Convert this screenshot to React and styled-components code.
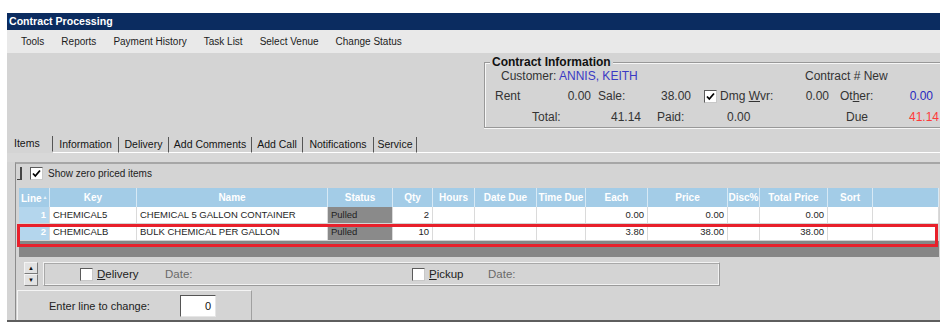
import React from 'react';
import styled, { createGlobalStyle } from 'styled-components';

const GlobalStyle = createGlobalStyle`
  body {
    margin: 0;
    background: #fff;
    font-family: "Liberation Sans", Arial, sans-serif;
  }
`;

const columns = [
  { key: 'line', label: 'Line', w: 31, align: 'right' },
  { key: 'key', label: 'Key', w: 87, align: 'left' },
  { key: 'name', label: 'Name', w: 191, align: 'left' },
  { key: 'status', label: 'Status', w: 65, align: 'left' },
  { key: 'qty', label: 'Qty', w: 40, align: 'right' },
  { key: 'hours', label: 'Hours', w: 42, align: 'right' },
  { key: 'due', label: 'Date Due', w: 62, align: 'left' },
  { key: 'time', label: 'Time Due', w: 49, align: 'left' },
  { key: 'each', label: 'Each', w: 62, align: 'right' },
  { key: 'price', label: 'Price', w: 80, align: 'right' },
  { key: 'disc', label: 'Disc%', w: 32, align: 'right' },
  { key: 'total', label: 'Total Price', w: 68, align: 'right' },
  { key: 'sort', label: 'Sort', w: 45, align: 'left' },
  { key: 'fill', label: '', w: 66, align: 'left' },
];

const rows = [
  { line: '1', key: 'CHEMICAL5', name: 'CHEMICAL 5 GALLON CONTAINER', status: 'Pulled', qty: '2', each: '0.00', price: '0.00', total: '0.00' },
  { line: '2', key: 'CHEMICALB', name: 'BULK CHEMICAL PER GALLON', status: 'Pulled', qty: '10', each: '3.80', price: '38.00', total: '38.00' },
];

const tabs = [
  { label: 'Items', w: 46, active: true },
  { label: 'Information', w: 66 },
  { label: 'Delivery', w: 50 },
  { label: 'Add Comments', w: 83 },
  { label: 'Add Call', w: 51 },
  { label: 'Notifications', w: 71 },
  { label: 'Service', w: 43 },
];

const menu = ['Tools', 'Reports', 'Payment History', 'Task List', 'Select Venue', 'Change Status'];

const gridTemplate = columns.map(c => `${c.w}px`).join(' ');

function Checkbox({ checked }) {
  return (
    <Box>
      {checked && (
        <svg width="11" height="11" viewBox="0 0 11 11">
          <path d="M2 5.5 L4.3 8 L9 2.5" stroke="#000" strokeWidth="1.8" fill="none" />
        </svg>
      )}
    </Box>
  );
}

function App() {
  return (
    <>
      <GlobalStyle />
      <Window>
        <TitleBar>Contract Processing</TitleBar>

        <MenuBar>
          {menu.map(m => <MenuItem key={m}>{m}</MenuItem>)}
        </MenuBar>

        <Toolbar>
          <GroupBox>
            <Legend>Contract Information</Legend>
            <InfoRow h={20}>
              <Cell w={320} pl={16}>Customer: <Value color="#3a3ac4">ANNIS, KEITH</Value></Cell>
              <Cell w={100}>Contract # New</Cell>
            </InfoRow>
            <InfoRow h={20}>
              <Cell w={50} pl={10}>Rent</Cell>
              <Cell w={56} right>0.00</Cell>
              <Cell w={59} pl={7}>Sale:</Cell>
              <Cell w={41} right>38.00</Cell>
              <Cell w={29} pl={13}><Checkbox checked /></Cell>
              <Cell w={70}>Dmg <u>W</u>vr:</Cell>
              <Cell w={39} right>0.00</Cell>
              <Cell w={61} pl={11}>Ot<u>h</u>er:</Cell>
              <Cell w={43} right><Value color="#2828c0">0.00</Value></Cell>
            </InfoRow>
            <InfoRow h={21}>
              <Cell w={115} pl={47}>Total:</Cell>
              <Cell w={41} right>41.14</Cell>
              <Cell w={86} pl={16}>Paid:</Cell>
              <Cell w={119}>0.00</Cell>
              <Cell w={49}>Due</Cell>
              <Cell w={44} right><Value color="#ff3a3a">41.14</Value></Cell>
            </InfoRow>
          </GroupBox>
        </Toolbar>

        <TabStrip>
          {tabs.map(t => (
            <Tab key={t.label} w={t.w} $active={t.active}>{t.label}</Tab>
          ))}
          <TabFill />
        </TabStrip>
        <Band />

        <ItemsPanel>
          <OptionsRow>
            <Bracket />
            <Checkbox checked />
            <OptionText>Show zero priced items</OptionText>
          </OptionsRow>

          <Grid>
            <HeaderRow>
              {columns.map(c => (
                <HeadCell key={c.key} $first={c.key === 'line'}>
                  {c.label}
                  {c.key === 'line' && <SortArrow>▲</SortArrow>}
                </HeadCell>
              ))}
            </HeaderRow>
            {rows.map(r => (
              <Row key={r.line}>
                {columns.map(c => (
                  <DataCell key={c.key} $align={c.align} $kind={c.key}>
                    {r[c.key] || ''}
                  </DataCell>
                ))}
              </Row>
            ))}
            <Highlight />
          </Grid>

          <ControlsRow>
            <Spinner>
              <SpinButton>▲</SpinButton>
              <SpinButton>▼</SpinButton>
            </Spinner>
            <DeliveryBox>
              <Slot w={85}>
                <Checkbox />
                <SlotLabel><u>D</u>elivery</SlotLabel>
              </Slot>
              <Slot w={247}><DateLabel>Date:</DateLabel></Slot>
              <Slot w={76}>
                <Checkbox />
                <SlotLabel><u>P</u>ickup</SlotLabel>
              </Slot>
              <Slot w={100}><DateLabel>Date:</DateLabel></Slot>
            </DeliveryBox>
          </ControlsRow>

          <LineBox>
            <LineLabel>Enter line to change:</LineLabel>
            <LineInput>0</LineInput>
          </LineBox>
        </ItemsPanel>
      </Window>
    </>
  );
}

const Window = styled.div`
  margin: 13px 0 0 7px;
  width: 933px;
  height: 309px;
  box-sizing: border-box;
  background: #d4d4d4;
  border-bottom: 2px solid #5e5e5e;
  display: flex;
  flex-direction: column;
  overflow: hidden;
`;

const TitleBar = styled.div`
  height: 17px;
  line-height: 17px;
  flex: none;
  background: #0b2c60;
  color: #fff;
  font-weight: bold;
  font-size: 10.6px;
  padding-left: 2px;
`;

const MenuBar = styled.div`
  height: 23px;
  flex: none;
  background: #e9e9e9;
  display: flex;
  align-items: center;
  gap: 17px;
  padding-left: 14px;
`;

const MenuItem = styled.span`
  font-size: 10px;
  color: #1c1c1c;
`;

const Toolbar = styled.div`
  height: 77px;
  flex: none;
  display: flex;
  justify-content: flex-end;
  align-items: flex-start;
`;

const GroupBox = styled.div`
  margin-top: 9px;
  width: 456px;
  height: 66px;
  box-sizing: border-box;
  border: 1px solid #989898;
  border-right: none;
  box-shadow: inset 1px 1px 0 #f6f6f6, 0 1px 0 #f6f6f6;
  display: flex;
  flex-direction: column;
`;

const Legend = styled.div`
  align-self: flex-start;
  margin: -8px 0 -3px 5px;
  padding: 0 2px;
  background: #d4d4d4;
  font-weight: bold;
  font-size: 12px;
  line-height: 14px;
  color: #111;
`;

const InfoRow = styled.div`
  height: ${p => p.h}px;
  display: flex;
  align-items: center;
  font-size: 12px;
  color: #333;
`;

const Cell = styled.div`
  flex: none;
  width: ${p => p.w}px;
  box-sizing: border-box;
  padding-left: ${p => p.pl || 0}px;
  text-align: ${p => (p.right ? 'right' : 'left')};
  white-space: nowrap;
  line-height: 14px;
`;

const Value = styled.span`
  color: ${p => p.color};
`;

const Box = styled.span`
  width: 13px;
  height: 13px;
  flex: none;
  box-sizing: border-box;
  background: #fff;
  border: 1px solid;
  border-color: #5a5a5a #c8c8c8 #c8c8c8 #5a5a5a;
  display: inline-flex;
  align-items: center;
  justify-content: center;
  vertical-align: middle;
`;

const TabStrip = styled.div`
  height: 23px;
  flex: none;
  display: flex;
  align-items: flex-end;
`;

const Tab = styled.div`
  width: ${p => p.w}px;
  height: 16px;
  box-sizing: border-box;
  flex: none;
  font-size: 10.5px;
  line-height: 15px;
  color: #151515;
  text-align: ${p => (p.$active ? 'left' : 'center')};
  padding-left: ${p => (p.$active ? 7 : 0)}px;
  border-right: 1px solid #555;
  border-bottom: 1px solid ${p => (p.$active ? 'transparent' : '#fff')};
  ${p => p.$active && 'margin-bottom: 1px;'}
`;

const TabFill = styled.div`
  flex: 1;
  border-bottom: 1px solid #fff;
`;

const Band = styled.div`
  height: 9px;
  flex: none;
  background: #d8d8d8;
`;

const ItemsPanel = styled.div`
  flex: 1;
  margin-left: 8px;
  border-left: 1px solid #8c8c8c;
  border-top: 2px solid #a6a6a6;
  display: flex;
  flex-direction: column;
`;

const OptionsRow = styled.div`
  height: 18px;
  display: flex;
  align-items: center;
`;

const Bracket = styled.span`
  width: 3px;
  height: 12px;
  margin: 0 8px 0 1px;
  border-right: 2px solid #444;
  border-bottom: 1px solid #444;
`;

const OptionText = styled.span`
  margin-left: 5px;
  font-size: 10px;
  color: #222;
`;

const Grid = styled.div`
  position: relative;
  margin: 6px 0 0 3px;
  width: 920px;
  height: 69px;
  background: #868686;
`;

const HeaderRow = styled.div`
  display: grid;
  grid-template-columns: ${gridTemplate};
  height: 19px;
  background: #a3cce7;
`;

const HeadCell = styled.div`
  border-right: 1px solid #d7e9f5;
  color: #fff;
  font-weight: bold;
  font-size: 10px;
  line-height: 19px;
  text-align: ${p => (p.$first ? 'left' : 'center')};
  padding-left: ${p => (p.$first ? 2 : 0)}px;
  white-space: nowrap;
  overflow: hidden;
`;

const SortArrow = styled.span`
  font-size: 5px;
  vertical-align: 3px;
  margin-left: 1px;
  color: #e8f3fa;
`;

const Row = styled.div`
  display: grid;
  grid-template-columns: ${gridTemplate};
  height: 17px;
  background: #fff;
  border-bottom: 1px solid #d4d4d4;
  box-sizing: border-box;
`;

const DataCell = styled.div`
  border-right: 1px solid #dadada;
  padding: 0 3px;
  font-size: 9.5px;
  line-height: 16px;
  color: #1e1e1e;
  text-align: ${p => p.$align};
  white-space: nowrap;
  overflow: hidden;
  ${p => p.$kind === 'line' && 'background: #b4d6ed; color: #fff; font-weight: bold;'}
  ${p => p.$kind === 'status' && 'background: #8a8a8a; color: #222;'}
`;

const Highlight = styled.div`
  position: absolute;
  left: -2px;
  right: 1px;
  top: 36px;
  height: 23px;
  box-sizing: border-box;
  border: 3px solid #e8202b;
  pointer-events: none;
`;

const ControlsRow = styled.div`
  display: flex;
  margin-top: 5px;
  height: 24px;
`;

const Spinner = styled.div`
  margin-left: 8px;
  width: 14px;
  display: flex;
  flex-direction: column;
`;

const SpinButton = styled.div`
  height: 12px;
  box-sizing: border-box;
  border: 1px solid;
  border-color: #f4f4f4 #7a7a7a #7a7a7a #f4f4f4;
  background: #e2e2e2;
  font-size: 6px;
  line-height: 10px;
  text-align: center;
  color: #111;
`;

const DeliveryBox = styled.div`
  margin-left: 5px;
  width: 677px;
  box-sizing: border-box;
  border: 1px solid;
  border-color: #f2f2f2 #9a9a9a #9a9a9a #f2f2f2;
  box-shadow: inset 1px 1px 0 #a8a8a8, inset -1px -1px 0 #f2f2f2;
  display: flex;
  align-items: center;
  padding-left: 36px;
`;

const Slot = styled.div`
  width: ${p => p.w}px;
  flex: none;
  display: flex;
  align-items: center;
`;

const SlotLabel = styled.span`
  margin-left: 4px;
  font-size: 11.5px;
  color: #222;
`;

const DateLabel = styled.span`
  font-size: 11.5px;
  color: #6a6a6a;
`;

const LineBox = styled.div`
  margin: 4px 0 0 1px;
  width: 235px;
  height: 30px;
  box-sizing: border-box;
  border-top: 1px solid #f4f4f4;
  border-left: 1px solid #f4f4f4;
  border-right: 1px solid #a0a0a0;
  display: flex;
  align-items: center;
  padding-left: 31px;
`;

const LineLabel = styled.span`
  width: 131px;
  font-size: 11px;
  color: #222;
`;

const LineInput = styled.div`
  width: 36px;
  height: 22px;
  box-sizing: border-box;
  background: #fff;
  border: 1px solid;
  border-color: #555 #e6e6e6 #e6e6e6 #555;
  font-size: 11px;
  line-height: 20px;
  text-align: right;
  padding-right: 4px;
  color: #111;
`;

export default App;
